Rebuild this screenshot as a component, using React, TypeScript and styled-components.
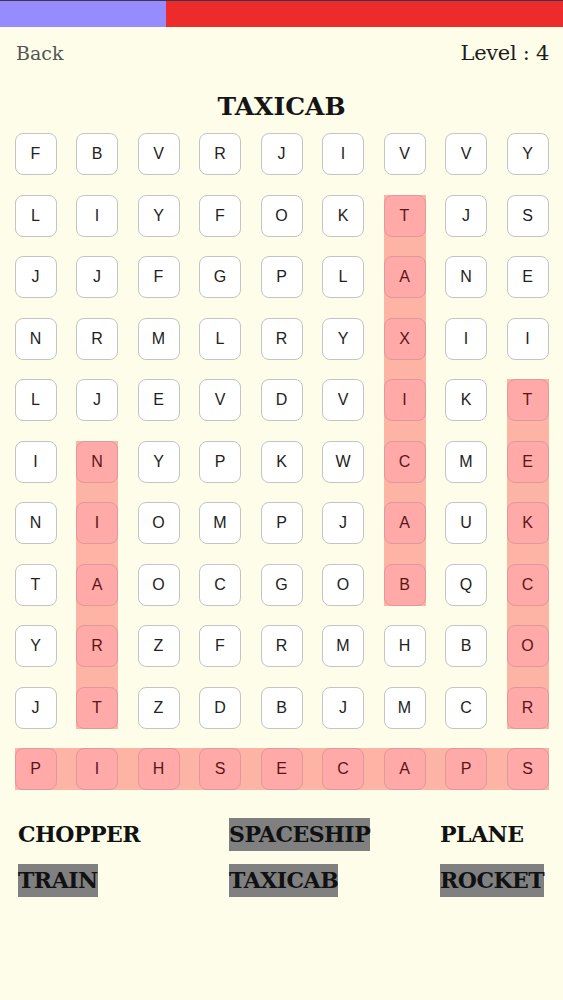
import styled, { createGlobalStyle } from 'styled-components';

const GlobalStyle = createGlobalStyle`
  body {
    margin: 0;
    background: #fdfde9;
    font-family: 'DejaVu Serif', serif;
  }
`;

const Page = styled.div`
  width: 563px;
  min-height: 1000px;
  background: #fdfde9;
  overflow: hidden;
`;

const Progress = styled.div`
  display: flex;
  height: 27px;
  border-top: 1px solid #3a3550;
  box-sizing: border-box;
`;

const ProgressDone = styled.div<{ $width: number }>`
  flex: 0 0 ${(props) => props.$width}px;
  background: #978cff;
`;

const ProgressLeft = styled.div`
  flex: 1;
  background: #ee2b2b;
`;

const Header = styled.div`
  display: flex;
  justify-content: space-between;
  align-items: flex-start;
  margin-top: 14px;
  padding: 0 14px 0 16px;
  height: 24px;
`;

const BackLink = styled.span`
  font-size: 19px;
  line-height: 24px;
  color: #555;
`;

const Level = styled.span`
  font-size: 21px;
  line-height: 24px;
  color: #1c1c1c;
  letter-spacing: -0.3px;
`;

const Title = styled.h1`
  margin: 29px 0 0;
  text-align: center;
  font-size: 25px;
  line-height: 25px;
  font-weight: bold;
  color: #151515;
`;

const Board = styled.div`
  display: grid;
  grid-template-columns: repeat(9, 42px);
  grid-template-rows: repeat(11, 42px);
  column-gap: 19.5px;
  row-gap: 19.5px;
  justify-content: center;
  margin-top: 14px;
`;

const Band = styled.div<{ $row: string; $col: string }>`
  grid-row: ${(props) => props.$row};
  grid-column: ${(props) => props.$col};
  background: #fdb4a4;
  z-index: 0;
`;

const Cell = styled.div<{ $row: number; $col: number; $found: boolean }>`
  grid-row: ${(props) => props.$row};
  grid-column: ${(props) => props.$col};
  z-index: 1;
  display: flex;
  align-items: center;
  justify-content: center;
  box-sizing: border-box;
  border-radius: 8px;
  border: 1px solid ${(props) => (props.$found ? '#de9a9a' : '#c4c4c4')};
  background: ${(props) => (props.$found ? '#ffa9a9' : '#ffffff')};
  color: ${(props) => (props.$found ? '#5a1616' : '#222')};
  font-family: 'Liberation Sans', Arial, sans-serif;
  font-size: 16px;
`;

const WordList = styled.div`
  display: grid;
  grid-template-columns: repeat(3, 211px);
  grid-auto-rows: 33px;
  row-gap: 13px;
  margin-top: 28px;
  padding-left: 18px;
`;

const Word = styled.div`
  font-size: 22px;
  line-height: 33px;
  font-weight: bold;
  letter-spacing: -0.5px;
  color: #111;
`;

const WordText = styled.span<{ $done: boolean }>`
  display: inline-block;
  background: ${(props) => (props.$done ? '#808080' : 'transparent')};
`;

const rows = [
  'FBVRJIVVY',
  'LIYFOKTJS',
  'JJFGPLANE',
  'NRMLRYXII',
  'LJEVDVIKT',
  'INYPKWCME',
  'NIOMPJAUK',
  'TAOCGOBQC',
  'YRZFRMHBO',
  'JTZDBJMCR',
  'PIHSECAPS',
];

const bands = [
  { row: '2 / 9', col: '7' },
  { row: '6 / 11', col: '2' },
  { row: '5 / 11', col: '9' },
  { row: '11', col: '1 / 10' },
];

function isFound(r: number, c: number) {
  if (c === 7 && r >= 2 && r <= 8) return true;
  if (c === 2 && r >= 6 && r <= 10) return true;
  if (c === 9 && r >= 5 && r <= 10) return true;
  if (r === 11) return true;
  return false;
}

const words = [
  { text: 'CHOPPER', done: false },
  { text: 'SPACESHIP', done: true },
  { text: 'PLANE', done: false },
  { text: 'TRAIN', done: true },
  { text: 'TAXICAB', done: true },
  { text: 'ROCKET', done: true },
];

function App() {
  return (
    <Page>
      <GlobalStyle />
      <Progress>
        <ProgressDone $width={166} />
        <ProgressLeft />
      </Progress>
      <Header>
        <BackLink>Back</BackLink>
        <Level>Level : 4</Level>
      </Header>
      <Title>TAXICAB</Title>
      <Board>
        {bands.map((b, i) => (
          <Band key={'b' + i} $row={b.row} $col={b.col} />
        ))}
        {rows.map((line, r) =>
          line.split('').map((letter, c) => (
            <Cell
              key={r + '-' + c}
              $row={r + 1}
              $col={c + 1}
              $found={isFound(r + 1, c + 1)}
            >
              {letter}
            </Cell>
          ))
        )}
      </Board>
      <WordList>
        {words.map((w) => (
          <Word key={w.text}>
            <WordText $done={w.done}>{w.text}</WordText>
          </Word>
        ))}
      </WordList>
    </Page>
  );
}

export default App;
